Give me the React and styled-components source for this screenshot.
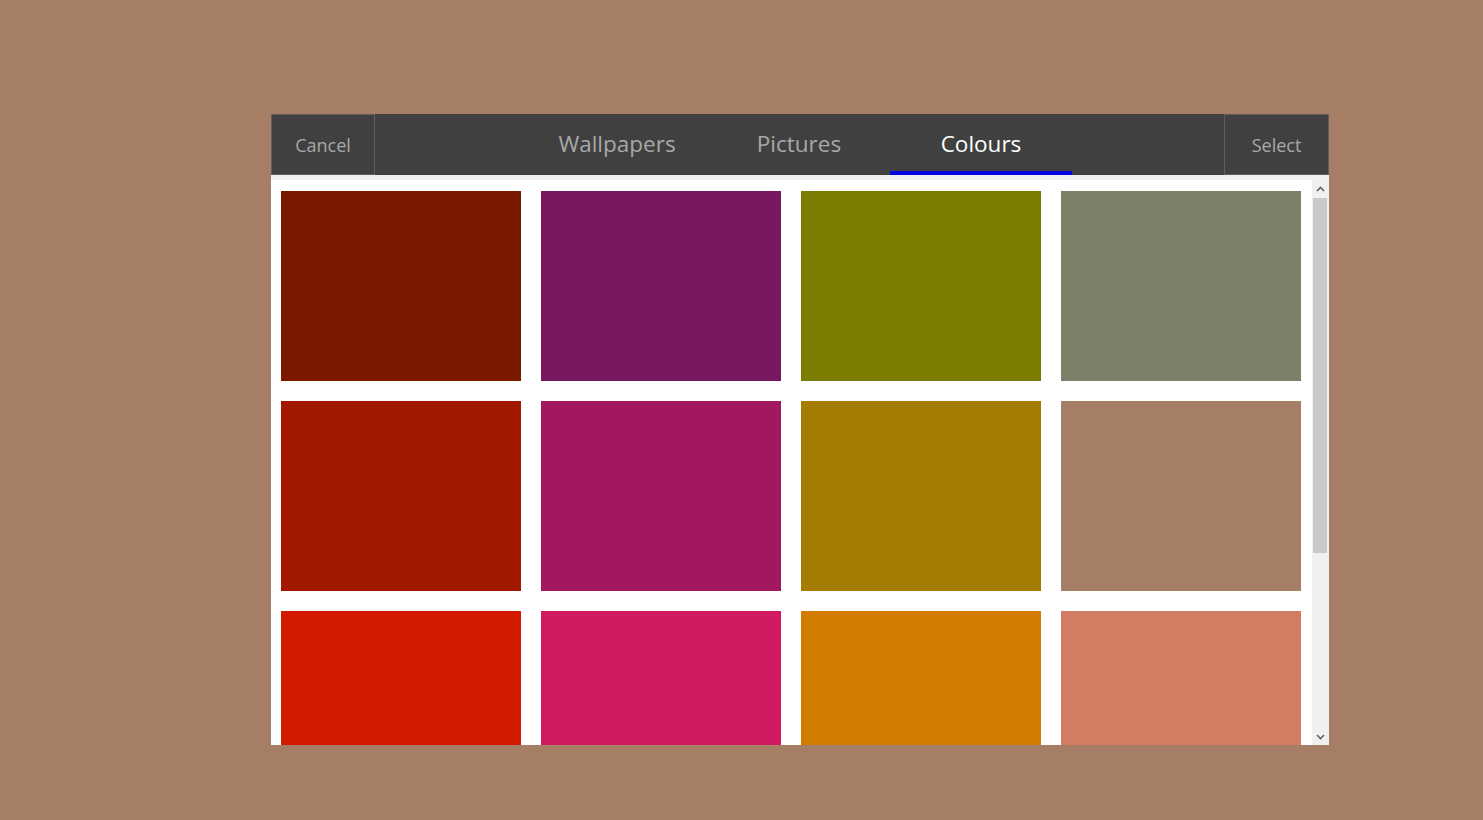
import React from "react";
import styled, { createGlobalStyle } from "styled-components";

const Global = createGlobalStyle`
  html, body { margin: 0; padding: 0; background: #a67e66; }
  body { font-family: "Open Sans", "Noto Sans", sans-serif; }
  #root { min-height: 820px; }
`;

const Page = styled.div`
  padding: 114px 0 0 271px;
`;

const Dialog = styled.div`
  width: 1058px;
  height: 631px;
  display: flex;
  flex-direction: column;
`;

const Header = styled.div`
  height: 61px;
  flex: none;
  background: #404040;
  display: flex;
  align-items: stretch;
`;

const SideButton = styled.button`
  width: ${(p) => p.$w}px;
  flex: none;
  background: transparent;
  border: 1px solid #5e5e5e;
  color: #a8a8a8;
  font-family: "Open Sans", "Noto Sans", sans-serif;
  font-size: 18px;
  padding: 0;
  margin: 0;
  cursor: pointer;
`;

const Tabs = styled.div`
  flex: 1;
  display: flex;
  justify-content: center;
  padding-right: 1px;
`;

const Tab = styled.div`
  width: 182px;
  display: flex;
  align-items: center;
  justify-content: center;
  font-size: 22.5px;
  color: ${(p) => (p.$active ? "#ffffff" : "#a8a8a8")};
  border-bottom: 4px solid ${(p) => (p.$active ? "#0505e0" : "transparent")};
  padding-top: 1px;
  box-sizing: border-box;
`;

const Body = styled.div`
  flex: 1;
  display: flex;
  min-height: 0;
  background: #ffffff;
  border-top: 5px solid #eef0f0;
`;

const Content = styled.div`
  flex: 1;
  overflow: hidden;
  padding: 11px 11px 0 10px;
`;

const Grid = styled.div`
  display: grid;
  grid-template-columns: repeat(4, 240px);
  grid-auto-rows: 190px;
  gap: 20px;
`;

const Swatch = styled.div`
  background: ${(p) => p.$c};
`;

const Scrollbar = styled.div`
  width: 17px;
  flex: none;
  background: #f0f0f0;
  display: flex;
  flex-direction: column;
  align-items: center;
`;

const Arrow = styled.div`
  height: 17px;
  width: 17px;
  display: flex;
  align-items: center;
  justify-content: center;
  flex: none;
`;

const Track = styled.div`
  flex: 1;
  width: 100%;
  padding: 1px 2px 0 1px;
  box-sizing: border-box;
`;

const Thumb = styled.div`
  height: 355px;
  background: #c8c8c8;
`;

const colours = [
  "#7a1900", "#77175f", "#7a7d00", "#7d8068",
  "#a31900", "#a3175f", "#a37c00", "#a67e66",
  "#d21a00", "#d21a62", "#d27c00", "#d27c63",
  "#2d1a00", "#2d175f", "#2d7c00", "#2d8068",
];

const Chevron = ({ up }) => (
  <svg width="9" height="6" viewBox="0 0 9 6">
    <path
      d={up ? "M1 5 L4.5 1.5 L8 5" : "M1 1 L4.5 4.5 L8 1"}
      fill="none"
      stroke="#606060"
      strokeWidth="1.6"
    />
  </svg>
);

export default function App() {
  return (
    <>
      <Global />
      <Page>
        <Dialog>
          <Header>
            <SideButton $w={104}>Cancel</SideButton>
            <Tabs>
              <Tab>Wallpapers</Tab>
              <Tab>Pictures</Tab>
              <Tab $active>Colours</Tab>
            </Tabs>
            <SideButton $w={105}>Select</SideButton>
          </Header>
          <Body>
            <Content>
              <Grid>
                {colours.map((c, i) => (
                  <Swatch key={i} $c={c} />
                ))}
              </Grid>
            </Content>
            <Scrollbar>
              <Arrow>
                <Chevron up />
              </Arrow>
              <Track>
                <Thumb />
              </Track>
              <Arrow>
                <Chevron />
              </Arrow>
            </Scrollbar>
          </Body>
        </Dialog>
      </Page>
    </>
  );
}
